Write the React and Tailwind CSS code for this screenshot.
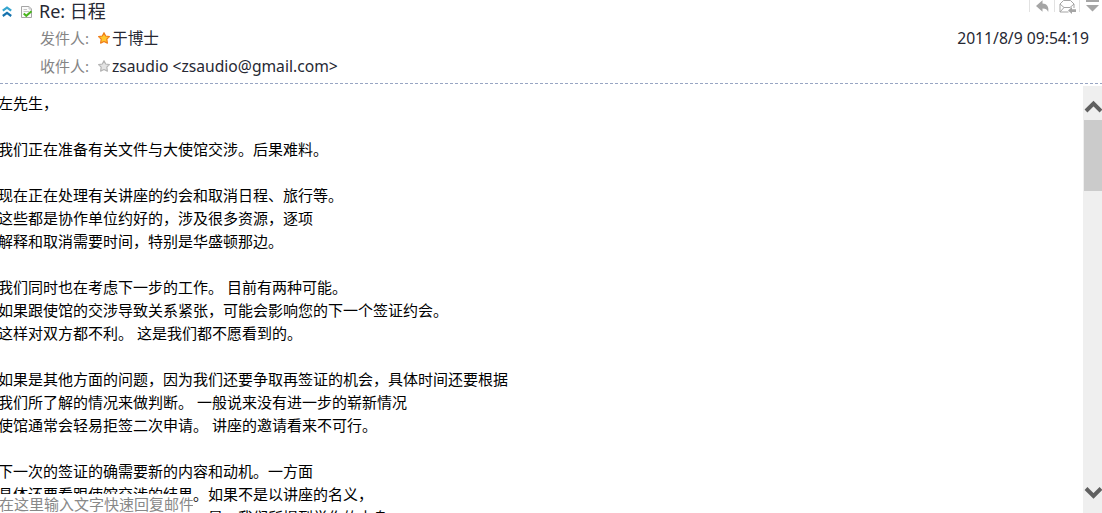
import { useState } from "react";

const paragraphs = [
  ["左先生，"],
  ["我们正在准备有关文件与大使馆交涉。后果难料。"],
  [
    "现在正在处理有关讲座的约会和取消日程、旅行等。",
    "这些都是协作单位约好的，涉及很多资源，逐项",
    "解释和取消需要时间，特别是华盛顿那边。",
  ],
  [
    "我们同时也在考虑下一步的工作。 目前有两种可能。",
    "如果跟使馆的交涉导致关系紧张，可能会影响您的下一个签证约会。",
    "这样对双方都不利。 这是我们都不愿看到的。",
  ],
  [
    "如果是其他方面的问题，因为我们还要争取再签证的机会，具体时间还要根据",
    "我们所了解的情况来做判断。 一般说来没有进一步的崭新情况",
    "使馆通常会轻易拒签二次申请。 讲座的邀请看来不可行。",
  ],
  [
    "下一次的签证的确需要新的内容和动机。一方面",
    "具体还要看跟使馆交涉的结果。如果不是以讲座的名义，",
    "那么就需要有其他的理由和目，是，我们所提到学作的本身",
  ],
];

function CollapseIcon() {
  return (
    <svg width="10" height="12" viewBox="0 0 10 12" fill="none" strokeWidth="2.2">
      <path d="M0.8 4.6 L5 1.5 L9.2 4.6" stroke="#36a5cf" />
      <path d="M0.8 10 L5 6.9 L9.2 10" stroke="#1672ad" />
    </svg>
  );
}

function MailCheckIcon() {
  return (
    <svg width="12" height="13" viewBox="0 0 12 13" fill="none">
      <path d="M1 .5 H8 L10.5 3 V11.5 H.5 V.5 Z" fill="#fbfbfb" stroke="#a5a5a5" />
      <path d="M8 .5 V3 H10.5 M2.5 3.5 H6 M2.5 5.5 H8" stroke="#c4c4c4" />
      <path d="M2.7 7.5 L5.3 9.8 L10.5 5.3" stroke="#48b51d" strokeWidth="2" />
    </svg>
  );
}

function Star({ active }) {
  return (
    <svg width="12" height="12" viewBox="0 0 12 12">
      <path
        d="M6 .7 L7.7 4 L11.4 4.6 L8.8 7.2 L9.4 11.1 L6 9.5 L2.6 11.1 L3.2 7.2 L.6 4.6 L4.3 4 Z"
        fill={active ? "#ffc72e" : "#e3e3e3"}
        stroke={active ? "#ef7d18" : "#b4b4b4"}
        strokeWidth="1.2"
        strokeLinejoin="round"
      />
    </svg>
  );
}

function Toolbar() {
  return (
    <div className="mr-[2px] flex h-[14px] items-start text-[#a5a5a5]">
      <span className="h-3 w-px bg-[#e2e2e2]" />
      <svg className="ml-[6px]" width="14" height="14" viewBox="0 0 14 14" fill="currentColor">
        <path d="M0 6 L6.5 .2 V3.5 C10.5 3.5 13.3 6.5 12.2 12 C11.3 9.4 9.8 8.4 6.5 8.4 V11.8 Z" />
      </svg>
      <span className="ml-[4px] h-3 w-px bg-[#e2e2e2]" />
      <svg className="ml-[4px]" width="18" height="14" viewBox="0 0 18 14" fill="none" stroke="currentColor">
        <path d="M9.5 12 H1 V4 L4.5 .5 H11.5 L15 4 V8" />
        <path d="M1 4 L5 7.5 H11 L15 4 M1 12 L5 7.5" />
        <path d="M9 10.5 L13 7 V9.2 H17 V12 H13 V14 Z" fill="currentColor" stroke="none" />
      </svg>
      <span className="ml-[2px] h-3 w-px bg-[#e2e2e2]" />
      <svg className="ml-[6px]" width="14" height="14" viewBox="0 0 14 14" fill="currentColor">
        <path d="M0 0 H13 V2 H0 Z M0 5 H13 L6.5 11.5 Z" />
      </svg>
    </div>
  );
}

function Contact({ label, name, active }) {
  return (
    <div className="flex h-7 items-center pl-px">
      <span className="w-[58px] text-[15px] text-[#858585]">{label}</span>
      <Star active={active} />
      <span className="ml-[2px] pt-px">{name}</span>
    </div>
  );
}

function ScrollBar() {
  return (
    <div className="mt-[2px] flex w-[19px] shrink-0 flex-col bg-[#efefef] pl-px">
      <svg className="h-[34px] w-[18px]" viewBox="0 0 18 34" fill="none">
        <path d="M2 25 L9.5 17.5 L17 25" stroke="#606060" strokeWidth="4" />
      </svg>
      <div className="h-[71px] bg-[#cbcbcb]" />
      <svg className="mt-auto mb-[8px] h-[24px] w-[18px]" viewBox="0 0 18 24" fill="none">
        <path d="M2 7.5 L9.5 15 L17 7.5" stroke="#606060" strokeWidth="4" />
      </svg>
    </div>
  );
}

export default function App() {
  const [reply, setReply] = useState("");

  return (
    <div className="relative flex h-[513px] w-[1102px] flex-col overflow-hidden bg-white font-['Noto_Sans','Noto_Sans_CJK_SC',sans-serif] text-[#262833]">
      <header className="flex h-[83px] shrink-0 justify-between">
        <div className="flex pl-[2px]">
          <div className="flex h-6 w-[37px] shrink-0 items-center gap-[9px]">
            <CollapseIcon />
            <MailCheckIcon />
          </div>
          <div className="text-[15.65px] whitespace-nowrap">
            <h1 className="h-6 text-[18px] leading-[23px]">Re: 日程</h1>
            <Contact label="发件人:" name="于博士" active />
            <Contact label="收件人:" name="zsaudio <zsaudio@gmail.com>" />
          </div>
        </div>
        <div className="flex flex-col items-end">
          <Toolbar />
          <time className="mt-[10px] mr-[13px] text-[15.7px] leading-7">2011/8/9 09:54:19</time>
        </div>
      </header>

      <div className="h-px shrink-0 bg-[repeating-linear-gradient(90deg,#98a5c3_0_3px,transparent_3px_5px)]" />

      <div className="flex min-h-0 flex-1">
        <main className="-ml-[2px] flex min-w-0 flex-1 flex-col gap-[23px] pt-[8px] text-[15px] leading-[23px] whitespace-nowrap text-black">
          {paragraphs.map((lines, i) => (
            <div key={i}>
              {lines.map((line) => (
                <p key={line} className="h-[23px]">{line}</p>
              ))}
            </div>
          ))}
        </main>
        <ScrollBar />
      </div>

      {/* quick reply floats over the message */}
      <input
        className="absolute bottom-0 left-[-1px] h-[19px] w-[194px] bg-white pt-px text-[15px] outline-none placeholder:text-[#888888]"
        placeholder="在这里输入文字快速回复邮件"
        value={reply}
        onChange={(e) => setReply(e.target.value)}
      />
    </div>
  );
}
